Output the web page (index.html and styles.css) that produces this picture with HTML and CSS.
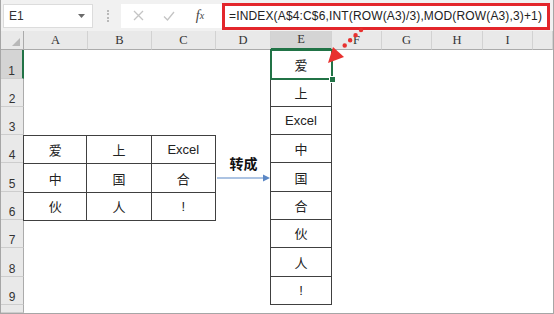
FILE: index.html
```html
<!DOCTYPE html>
<html>
<head>
<link rel="stylesheet" href="styles.css">
</head>
<body>
<div class="window">
  <div class="toolbar">
    <div class="namebox">
      <span>E1</span>
      <svg class="caret" width="7" height="4" viewBox="0 0 7 4"><polygon points="0,0 7,0 3.5,4" fill="#6a6a6a"/></svg>
    </div>
    <div class="grip"></div>
    <div class="fx-tools">
      <span class="tool">
        <svg width="11" height="11" viewBox="0 0 11 11"><path d="M1 1 L10 10 M10 1 L1 10" stroke="#c4c4c4" stroke-width="1.3" fill="none"/></svg>
      </span>
      <span class="tool">
        <svg width="12" height="10" viewBox="0 0 12 10"><path d="M1 5.5 L4.5 9 L11 1" stroke="#c4c4c4" stroke-width="1.3" fill="none"/></svg>
      </span>
      <span class="tool fx">f<small>x</small></span>
    </div>
    <div class="formula">=INDEX(A$4:C$6,INT(ROW(A3)/3),MOD(ROW(A3),3)+1)</div>
  </div>

  <div class="sheet">
    <div class="corner"><span class="corner-mark"></span></div>
    <div class="col-head">A</div>
    <div class="col-head">B</div>
    <div class="col-head">C</div>
    <div class="col-head">D</div>
    <div class="col-head active">E</div>
    <div class="col-head">F</div>
    <div class="col-head">G</div>
    <div class="col-head">H</div>
    <div class="col-head">I</div>
    <div class="col-head"></div>

    <div class="row-heads">
      <div class="row-head active">1</div>
      <div class="row-head">2</div>
      <div class="row-head">3</div>
      <div class="row-head">4</div>
      <div class="row-head">5</div>
      <div class="row-head">6</div>
      <div class="row-head">7</div>
      <div class="row-head">8</div>
      <div class="row-head">9</div>
      <div class="row-head"></div>
    </div>

    <div class="source">
      <div class="cell">爱</div>
      <div class="cell">上</div>
      <div class="cell">Excel</div>
      <div class="cell">中</div>
      <div class="cell">国</div>
      <div class="cell">合</div>
      <div class="cell">伙</div>
      <div class="cell">人</div>
      <div class="cell">!</div>
    </div>

    <div class="convert">
      <div class="convert-label">转成</div>
      <svg width="54" height="8" viewBox="0 0 54 8"><line x1="0" y1="4" x2="47" y2="4" stroke="#5b87c5" stroke-width="1.2"/><polygon points="46,0.5 53,4 46,7.5" fill="#5b87c5"/></svg>
    </div>

    <div class="result">
      <div class="cell selected">爱</div>
      <div class="cell">上</div>
      <div class="cell">Excel</div>
      <div class="cell">中</div>
      <div class="cell">国</div>
      <div class="cell">合</div>
      <div class="cell">伙</div>
      <div class="cell">人</div>
      <div class="cell">!</div>
    </div>
  </div>

  <svg class="callout" width="554" height="314" viewBox="0 0 554 314">
    <line x1="360" y1="30" x2="339" y2="50" stroke="#e8312f" stroke-width="4.5" stroke-linecap="round" stroke-dasharray="0 7.5"/>
    <polygon points="327,63 332,47 343,57" fill="#e8312f"/>
  </svg>
</div>
</body>
</html>
```

FILE: styles.css
```css
body {
  margin: 0;
}
.window {
  width: 554px;
  height: 314px;
  box-sizing: border-box;
  border: 1px solid #a6a6a6;
  border-top: none;
  background: #f1f1f1;
  display: flex;
  flex-direction: column;
  position: relative;
  overflow: hidden;
  font-family: "Liberation Sans", "Noto Sans CJK SC", sans-serif;
  color: #222;
}

/* formula bar */
.toolbar {
  height: 31px;
  flex: none;
  display: flex;
  align-items: center;
  padding-left: 2px;
}
.namebox {
  width: 90px;
  height: 24px;
  box-sizing: border-box;
  background: #fff;
  border: 1px solid #dcdcdc;
  display: flex;
  align-items: center;
  justify-content: space-between;
  padding: 0 7px 0 5px;
  font-size: 12px;
  color: #333;
}
.grip {
  width: 0;
  height: 12px;
  margin-left: 14px;
  border-left: 2px dotted #b9b9b9;
}
.fx-tools {
  width: 101px;
  height: 24px;
  margin-left: 12px;
  background: #fff;
  display: flex;
  align-items: center;
  gap: 11px;
  padding-left: 7px;
  box-sizing: border-box;
}
.tool {
  width: 20px;
  display: flex;
  justify-content: center;
  align-items: center;
}
.fx {
  font-family: "Liberation Serif", serif;
  font-style: italic;
  font-size: 14px;
  color: #444;
}
.fx small {
  font-size: 10px;
}
.formula {
  width: 328px;
  height: 27px;
  margin-top: 1px;
  box-sizing: border-box;
  border: 3px solid #e3262b;
  background: #fff;
  padding-left: 4px;
  display: flex;
  align-items: center;
  font-size: 12px;
  letter-spacing: 0.15px;
  color: #222;
  white-space: nowrap;
  overflow: hidden;
}

/* sheet grid */
.sheet {
  flex: 1;
  background: #fff;
  display: grid;
  grid-template-columns: 23px 64px 64px 64px 55px 61px 50px 50px 51px 50px 1fr;
  grid-template-rows: 19px 29px 28px 28px 28px 29px 28px 28px 29px 28px 1fr;
}
.corner {
  background: #e9e9e9;
  border-bottom: 1px solid #ababab;
  border-right: 1px solid #ababab;
  display: flex;
  justify-content: flex-end;
  align-items: flex-end;
  padding: 0 3px 3px 0;
}
.corner-mark {
  width: 0;
  height: 0;
  border-left: 8px solid transparent;
  border-bottom: 8px solid #b8b8b8;
}
.col-head {
  background: #e9e9e9;
  border-bottom: 1px solid #ababab;
  border-right: 1px solid #d2d2d2;
  display: flex;
  align-items: center;
  justify-content: center;
  font-family: "Liberation Serif", serif;
  font-size: 12.5px;
  color: #333;
}
.col-head.active {
  background: #d4d4d4;
  border-bottom: 2px solid #217346;
}
.row-heads {
  grid-column: 1;
  grid-row: 2 / 12;
  display: grid;
  grid-template-rows: 29px 28px 28px 28px 29px 28px 28px 29px 28px 1fr;
}
.row-head {
  background: #e9e9e9;
  border-bottom: 1px solid #cdcdcd;
  border-right: 1px solid #ababab;
  display: flex;
  align-items: flex-end;
  justify-content: center;
  padding-bottom: 0;
  font-size: 12px;
  color: #333;
}
.row-head.active {
  background: #d4d4d4;
  border-right: 2px solid #217346;
}

/* tables */
.cell {
  display: flex;
  align-items: center;
  justify-content: center;
  font-size: 13px;
  border-right: 1px solid #404040;
  border-bottom: 1px solid #404040;
  color: #222;
}
.source {
  grid-column: 2 / 5;
  grid-row: 5 / 8;
  display: grid;
  grid-template-columns: 1fr 1fr 1fr;
  grid-template-rows: 28px 29px 28px;
  border-top: 1px solid #404040;
  margin-left: -1px;
}
.source .cell:nth-child(3n+1) {
  border-left: 1px solid #404040;
}
.convert {
  grid-column: 5;
  grid-row: 5 / 8;
  display: flex;
  flex-direction: column;
  align-items: center;
  justify-content: center;
  padding-bottom: 20px;
  gap: 2px;
}
.convert-label {
  font-family: "Noto Sans CJK SC", sans-serif;
  font-weight: bold;
  font-size: 14px;
  line-height: 18px;
  color: #111;
}
.result {
  grid-column: 6;
  grid-row: 2 / 11;
  display: grid;
  grid-template-rows: 29px 28px 28px 28px 29px 28px 28px 29px 28px;
  margin-left: -1px;
}
.result .cell {
  border-left: 1px solid #404040;
}
.cell.selected {
  position: relative;
}
.cell.selected::before {
  content: "";
  position: absolute;
  inset: -1px -2px -2px -1px;
  border: 2px solid #217346;
}
.cell.selected::after {
  content: "";
  position: absolute;
  right: -5px;
  bottom: -5px;
  width: 5px;
  height: 5px;
  background: #217346;
  border: 1px solid #fff;
}

.callout {
  position: absolute;
  left: 0;
  top: 0;
  pointer-events: none;
}
```
